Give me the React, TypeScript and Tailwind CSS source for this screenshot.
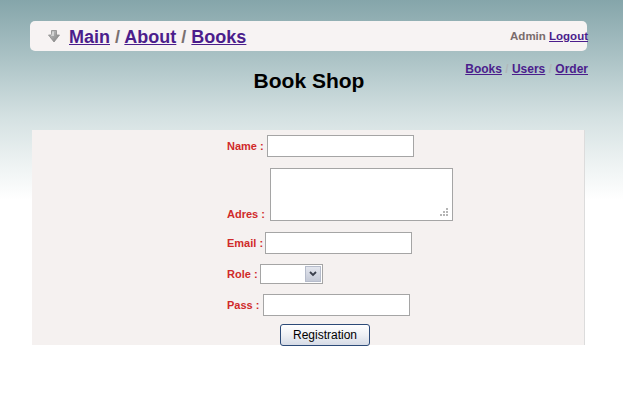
import { ReactNode } from "react";

const font = { fontFamily: '"Liberation Sans", Arial, sans-serif' };

function Label({ children, w }: { children: ReactNode; w: string }) {
  return (
    <span className={`${w} shrink-0 text-[11px] font-bold text-[#d02a2a] leading-none whitespace-nowrap`}>
      {children}
    </span>
  );
}

function TextInput() {
  return (
    <input
      type="text"
      className="w-[147px] h-[22px] bg-white border border-[#a5a5a5] outline-none"
    />
  );
}

function DownIcon() {
  return (
    <svg width="12" height="13" viewBox="0 0 12 13">
      <defs>
        <linearGradient id="dg" x1="0" y1="0" x2="1" y2="1">
          <stop offset="0" stopColor="#c8c8c8" />
          <stop offset="1" stopColor="#7d7d7d" />
        </linearGradient>
      </defs>
      <path d="M3.5 0.5 H8.5 V5 H11.5 L6 12 L0.5 5 H3.5 Z" fill="url(#dg)" stroke="#8a8a8a" strokeWidth="0.8" />
      <path d="M4.5 1.5 H6 V6 H3 Z" fill="#e4e4e4" opacity="0.7" />
    </svg>
  );
}

export default function App() {
  return (
    <div
      style={font}
      className="w-[623px] h-[416px] overflow-hidden bg-[linear-gradient(to_bottom,#85a5aa_0px,#a9c1c4_55px,#d3e0e1_115px,#eef3f3_165px,#ffffff_200px)]"
    >
      <div className="pt-[21px] pl-[30px]">
        <div className="w-[557px] h-[30px] rounded-[5px] bg-[#f7f3f3] flex items-center justify-between pl-[18px]">
          <div className="flex items-center">
            <DownIcon />
            <div className="ml-[9px] text-[18px] font-bold text-[#7a7070] leading-none pt-[2px]">
              <a href="#" className="text-[#4b1d8c] underline">Main</a>
              {" / "}
              <a href="#" className="text-[#4b1d8c] underline">About</a>
              {" / "}
              <a href="#" className="text-[#4b1d8c] underline">Books</a>
            </div>
          </div>
          <div className="text-[11.5px] font-bold text-[#7a6c6c] leading-none -mr-[1px] pt-[2px]">
            Admin{" "}
            <a href="#" className="text-[#4b1d8c] underline">Logout</a>
          </div>
        </div>

        <div className="w-[558px] grid grid-cols-[1fr_auto_1fr]">
          <div />
          <h1 className="mt-[18px] text-[21px] font-bold text-black leading-[24px]">Book Shop</h1>
          <div className="text-right mt-[12px] text-[12px] font-bold leading-none text-[#b0b8ba]">
            <a href="#" className="text-[#4b1d8c] underline">Books</a>
            {" / "}
            <a href="#" className="text-[#4b1d8c] underline">Users</a>
            {" / "}
            <a href="#" className="text-[#4b1d8c] underline">Order</a>
          </div>
        </div>
      </div>

      <div className="mt-[37px] ml-[32px] w-[553px] h-[215px] bg-[#f5f1f0] border-r border-[#dcdcdc] pt-[5px] pl-[195px] flex flex-col">
        <div className="flex items-center">
          <Label w="w-[40px]">Name :</Label>
          <TextInput />
        </div>
        <div className="mt-[11px] flex items-end">
          <span className="pb-[1px]">
            <Label w="w-[43px] block">Adres :</Label>
          </span>
          <div className="relative w-[183px] h-[53px] bg-white border border-[#a5a5a5]">
            <svg className="absolute right-[3px] bottom-[3px]" width="9" height="9" viewBox="0 0 9 9">
              <g fill="#b5b5b5">
                <rect x="6" y="0" width="2" height="2" />
                <rect x="3" y="3" width="2" height="2" />
                <rect x="6" y="3" width="2" height="2" />
                <rect x="0" y="6" width="2" height="2" />
                <rect x="3" y="6" width="2" height="2" />
                <rect x="6" y="6" width="2" height="2" />
              </g>
            </svg>
          </div>
        </div>
        <div className="mt-[11px] flex items-center">
          <Label w="w-[38px]">Email :</Label>
          <TextInput />
        </div>
        <div className="mt-[10px] flex items-center">
          <Label w="w-[33px]">Role :</Label>
          <div className="w-[63px] h-[20px] bg-white border border-[#a5a5a5] flex justify-end p-[1px]">
            <div className="w-[16px] h-full bg-[linear-gradient(to_bottom,#e3e6ee,#c4c9d6)] border border-[#b6bccb] flex items-center justify-center">
              <svg width="8" height="6" viewBox="0 0 8 6">
                <path d="M1 1 L4 4 L7 1" fill="none" stroke="#3a3f4c" strokeWidth="1.8" />
              </svg>
            </div>
          </div>
        </div>
        <div className="mt-[10px] flex items-center">
          <Label w="w-[36px]">Pass :</Label>
          <TextInput />
        </div>
        <div className="mt-[6px] pl-[53px]">
          <button className="w-[90px] h-[22px] rounded-[3px] border border-[#2c4a78] bg-[linear-gradient(to_bottom,#ffffff,#eef0f4_50%,#d6dbe6)] text-[12px] text-black leading-none">
            Registration
          </button>
        </div>
      </div>
    </div>
  );
}
